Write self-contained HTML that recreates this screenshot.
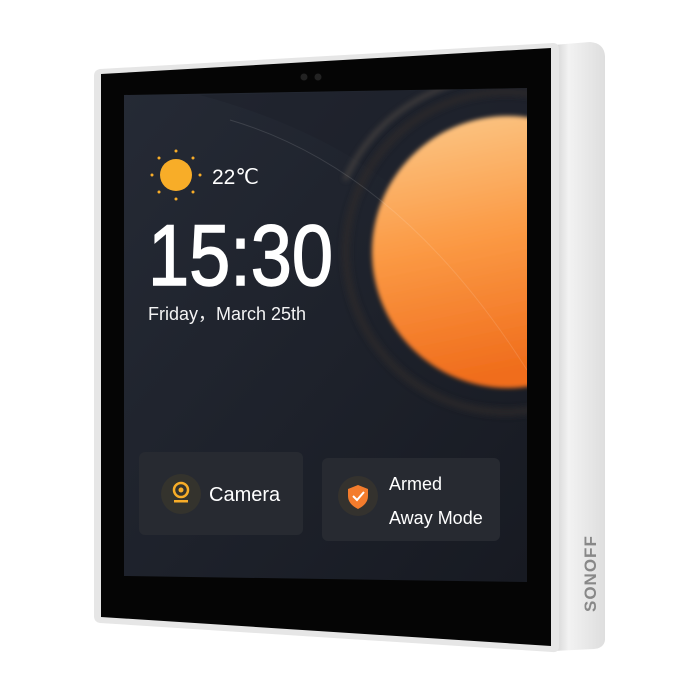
<!DOCTYPE html>
<html><head><meta charset="utf-8"><style>
html,body{margin:0;padding:0;background:#fff;}
svg{display:block}
text{font-family:"Liberation Sans",sans-serif;}
</style></head><body>
<svg width="700" height="700" viewBox="0 0 700 700" xmlns="http://www.w3.org/2000/svg">
<defs>
<linearGradient id="side" x1="0" x2="1" y1="0" y2="0">
<stop offset="0" stop-color="#d0d0d0"/><stop offset="0.3" stop-color="#f2f2f2"/><stop offset="1" stop-color="#dedede"/>
</linearGradient>
<linearGradient id="sun" x1="0" y1="0" x2="0.2" y2="1">
<stop offset="0" stop-color="#fcc98a"/><stop offset="0.5" stop-color="#fb9a45"/><stop offset="1" stop-color="#f06d1c"/>
</linearGradient>
<linearGradient id="scr" x1="0" y1="0" x2="1" y2="1">
<stop offset="0" stop-color="#252a35"/><stop offset="1" stop-color="#171a22"/>
</linearGradient>
<clipPath id="sc"><polygon points="124,95 527,88 527,582 124,576"/></clipPath>
<filter id="bl"><feGaussianBlur stdDeviation="2"/></filter>
<filter id="bl2"><feGaussianBlur stdDeviation="3"/></filter>
</defs>
<path d="M553,45 L590,42 Q604,43 605,56 L605,640 Q604,648 594,649 L553,651 Z" fill="url(#side)"/>
<path d="M100,69 L553,43 Q559,43 559,50 L559,646 Q559,653 552,652 L100,623 Q94,622 94,616 L94,76 Q94,70 100,69 Z" fill="#e6e6e6"/>
<path d="M101,74 L551,48 L551,646 L101,617 Z" fill="#050505"/>
<circle cx="304" cy="77" r="3.5" fill="#222"/><circle cx="318" cy="77" r="3.5" fill="#222"/>
<polygon points="124,95 527,88 527,582 124,576" fill="url(#scr)"/>
<g clip-path="url(#sc)">
<path d="M200,95 Q330,130 410,200 Q470,260 527,340 L527,88 Z" fill="#1e222b" opacity="0.6"/>
<path d="M345,180 Q390,80 527,70" fill="none" stroke="#5a5148" stroke-width="4" opacity="0.7" filter="url(#bl2)"/>
<circle cx="506" cy="252" r="160" fill="none" stroke="#2e2b29" stroke-width="8" opacity="0.7" filter="url(#bl2)"/>
<circle cx="508" cy="252" r="136" fill="url(#sun)" filter="url(#bl)"/>
<path d="M230,120 Q400,170 527,370" fill="none" stroke="#fff" stroke-width="1" opacity="0.12"/>
</g>
<circle cx="176" cy="175" r="16" fill="#f8ad28"/>
<g fill="#f8ad28">
<circle cx="176" cy="151" r="1.5"/><circle cx="176" cy="199" r="1.5"/><circle cx="152" cy="175" r="1.5"/><circle cx="200" cy="175" r="1.5"/>
<circle cx="159" cy="158" r="1.5"/><circle cx="193" cy="158" r="1.5"/><circle cx="159" cy="192" r="1.5"/><circle cx="193" cy="192" r="1.5"/>
</g>
<text x="212" y="184" font-size="21" fill="#fff">22℃</text>
<text x="148" y="285" font-size="86" fill="#fff" stroke="#fff" stroke-width="1.5" transform="translate(148 0) scale(0.86 1) translate(-148 0)">15:30</text>
<text x="148" y="320" font-size="18" fill="#fff" opacity="0.95">Friday，March 25th</text>
<rect x="139" y="452" width="164" height="83" rx="6" fill="#272a31"/>
<circle cx="181" cy="494" r="20" fill="#34332d"/>
<circle cx="181" cy="490" r="7" fill="none" stroke="#f8ad28" stroke-width="2.5"/>
<circle cx="181" cy="490" r="2.5" fill="#f8ad28"/>
<rect x="174" y="500" width="14" height="2.5" fill="#f8ad28"/>
<text x="209" y="501" font-size="20" fill="#fff">Camera</text>
<rect x="322" y="458" width="178" height="83" rx="6" fill="#272a31"/>
<circle cx="358" cy="496" r="20" fill="#34322e"/>
<path d="M358,485 L368,489 L368,496 Q368,504 358,509 Q348,504 348,496 L348,489 Z" fill="#f47c2c"/>
<path d="M353,496 L357,500 L364,492" fill="none" stroke="#fff" stroke-width="2"/>
<text x="389" y="490" font-size="18" fill="#fff">Armed</text>
<text x="389" y="524" font-size="18" fill="#fff">Away Mode</text>
<text x="0" y="0" font-size="17" font-weight="bold" fill="#888" letter-spacing="1" transform="translate(596 612) rotate(-90)">SONOFF</text>
</svg>
</body></html>
